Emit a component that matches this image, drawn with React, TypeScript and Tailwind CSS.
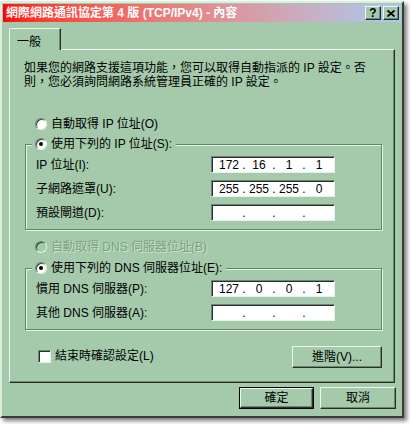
import React from "react";

const Radio = ({ checked = false, disabled = false }: { checked?: boolean; disabled?: boolean }) => (
  <span
    className={`inline-flex h-[12px] w-[12px] shrink-0 items-center justify-center rounded-full border border-t-[#6a8a70] border-l-[#6a8a70] border-r-[#e6f3e8] border-b-[#e6f3e8] shadow-[inset_1px_1px_0_#34483a] ${
      disabled ? "bg-[#a4caab]" : "bg-white"
    }`}
  >
    {checked && <span className="h-[4px] w-[4px] rounded-full bg-black" />}
  </span>
);

const IpBox = ({ parts }: { parts: string[] }) => (
  <div className="flex h-[17px] w-[124px] shrink-0 items-center border border-t-[#6a8a70] border-l-[#6a8a70] border-r-[#e6f3e8] border-b-[#e6f3e8] bg-white pl-[4px] text-[12px] leading-none shadow-[inset_1px_1px_0_#2c2c2c]">
    {parts.map((p, i) => (
      <React.Fragment key={i}>
        {i > 0 && <span className="w-[4px] text-center">.</span>}
        <span className="w-[26px] text-center">{p}</span>
      </React.Fragment>
    ))}
  </div>
);

const Btn = ({ children, className = "" }: { children: React.ReactNode; className?: string }) => (
  <button
    type="button"
    className={`flex items-center justify-center border border-t-[#eef7ef] border-l-[#eef7ef] border-r-[#2c2c2c] border-b-[#2c2c2c] bg-[#a4caab] text-[12px] text-black shadow-[inset_-1px_-1px_0_#6a8a70] ${className}`}
  >
    {children}
  </button>
);

const Row = ({ label, parts }: { label: string; parts: string[] }) => (
  <div className="flex h-[17px] items-center pl-[4px]">
    <span className="w-[175px]">{label}</span>
    <IpBox parts={parts} />
  </div>
);

const Group = ({ legend, children }: { legend: string; children: React.ReactNode }) => (
  <fieldset className="ml-[15px] mr-[12px] border border-[#5f8566] px-[6px] pb-[8px] shadow-[1px_1px_0_#e6f3e8,inset_1px_1px_0_#e6f3e8]">
    <legend className="bg-[#a4caab] pl-[3px] pr-[4px]">
      <span className="flex h-[14px] items-center gap-[4px]">
        <Radio checked />
        {legend}
      </span>
    </legend>
    <div className="mt-[5px] flex flex-col gap-[7px]">{children}</div>
  </fieldset>
);

export default function App() {
  return (
    <div className="h-[424px] w-[411px] bg-white pt-[1px] font-['Liberation_Sans','Noto_Sans_CJK_TC',sans-serif] text-[12px] text-black">
      <div className="flex h-[417px] w-[404px] flex-col border-2 border-t-[#dcecde] border-l-[#dcecde] border-r-[#3a3a3a] border-b-[#3a3a3a] bg-[#a4caab] p-[1px] shadow-[3px_3px_4px_rgba(0,0,0,0.5)]">
        {/* title bar */}
        <div className="flex h-[18px] shrink-0 items-center justify-between bg-linear-to-r from-[#ff0000] to-[#a6caf0] pl-[3px] pr-[2px]">
          <span className="text-[12px] font-bold leading-none text-white">
            網際網路通訊協定第 4 版 (TCP/IPv4) - 內容
          </span>
          <div className="flex gap-[2px]">
            <Btn className="h-[14px] w-[16px] text-[12px] font-bold leading-none">?</Btn>
            <Btn className="h-[14px] w-[16px]">
              <svg width="8" height="7" viewBox="0 0 8 7">
                <path d="M0.5 0.5 L7.5 6.5 M7.5 0.5 L0.5 6.5" stroke="#000" strokeWidth="1.8" />
              </svg>
            </Btn>
          </div>
        </div>

        {/* tab strip */}
        <div className="ml-[6px] mt-[6px] flex">
          <div className="relative z-10 -mb-[1px] h-[22px] w-[52px] rounded-tl-[2px] border-l border-t border-r border-t-[#eef7ef] border-l-[#eef7ef] border-r-[#2c2c2c] bg-[#a4caab] pl-[7px] pt-[4px] shadow-[inset_-1px_0_0_#6a8a70]">
            一般
          </div>
        </div>

        {/* tab panel */}
        <div className="ml-[6px] flex h-[334px] w-[386px] flex-col border border-t-[#eef7ef] border-l-[#eef7ef] border-r-[#2c2c2c] border-b-[#2c2c2c] shadow-[inset_-1px_-1px_0_#6a8a70]">
          <p className="ml-[14px] mt-[11px] leading-[14px]">
            如果您的網路支援這項功能，您可以取得自動指派的 IP 設定。否
            <br />
            則，您必須詢問網路系統管理員正確的 IP 設定。
          </p>

          <div className="ml-[25px] mt-[28px] flex h-[14px] items-center gap-[4px]">
            <Radio />
            自動取得 IP 位址(O)
          </div>

          <div className="mt-[6px]">
            <Group legend="使用下列的 IP 位址(S):">
              <Row label="IP 位址(I):" parts={["172", "16", "1", "1"]} />
              <Row label="子網路遮罩(U):" parts={["255", "255", "255", "0"]} />
              <Row label="預設閘道(D):" parts={["", "", "", ""]} />
            </Group>
          </div>

          <div className="ml-[25px] mt-[10px] flex h-[14px] items-center gap-[4px] text-[#7f9f85] [text-shadow:1px_1px_0_#cfe5d2]">
            <Radio disabled />
            自動取得 DNS 伺服器位址(B)
          </div>

          <div className="mt-[7px]">
            <Group legend="使用下列的 DNS 伺服器位址(E):">
              <Row label="慣用 DNS 伺服器(P):" parts={["127", "0", "0", "1"]} />
              <Row label="其他 DNS 伺服器(A):" parts={["", "", "", ""]} />
            </Group>
          </div>

          <div className="ml-[28px] mr-[12px] mt-[16px] flex items-start justify-between">
            <div className="mt-[1px] flex items-center gap-[4px]">
              <span className="h-[13px] w-[13px] border border-t-[#6a8a70] border-l-[#6a8a70] border-r-[#e6f3e8] border-b-[#e6f3e8] bg-white shadow-[inset_1px_1px_0_#2c2c2c]" />
              結束時確認設定(L)
            </div>
            <Btn className="h-[22px] w-[90px]">進階(V)...</Btn>
          </div>
        </div>

        {/* dialog buttons */}
        <div className="mt-[4px] flex justify-end gap-[6px] pr-[5px]">
          <div className="border border-black">
            <Btn className="h-[20px] w-[73px]">確定</Btn>
          </div>
          <Btn className="h-[22px] w-[76px]">取消</Btn>
        </div>
      </div>
    </div>
  );
}
